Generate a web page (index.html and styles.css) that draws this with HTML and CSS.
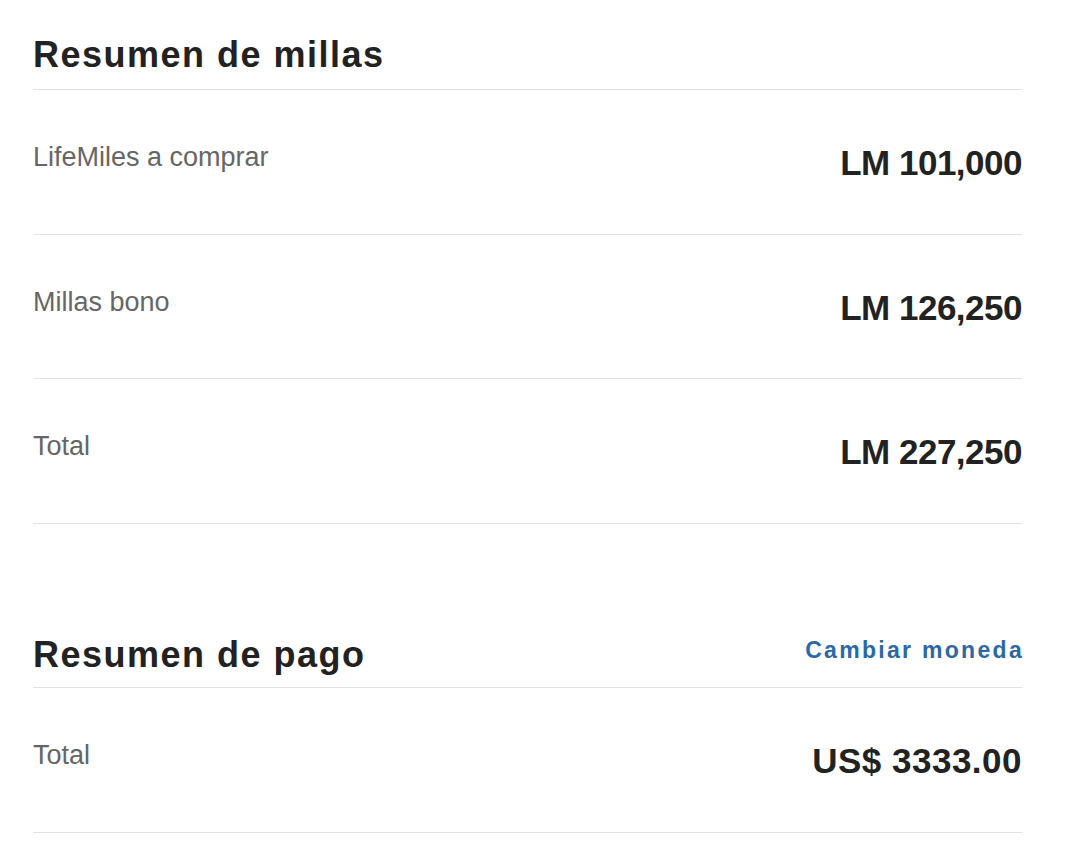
FILE: index.html
```html
<!DOCTYPE html>
<html lang="es">
<head>
<meta charset="utf-8">
<title>Resumen</title>
<link rel="stylesheet" href="styles.css">
</head>
<body>
<main class="page">
  <section class="summary">
    <div class="summary-head">
      <h2 class="summary-title">Resumen de millas</h2>
    </div>
    <div class="row">
      <span class="row-label">LifeMiles a comprar</span>
      <span class="row-value">LM 101,000</span>
    </div>
    <div class="row">
      <span class="row-label">Millas bono</span>
      <span class="row-value">LM 126,250</span>
    </div>
    <div class="row">
      <span class="row-label">Total</span>
      <span class="row-value">LM 227,250</span>
    </div>
  </section>
  <section class="summary summary-pay">
    <div class="summary-head">
      <h2 class="summary-title">Resumen de pago</h2>
      <a class="summary-link" href="#">Cambiar moneda</a>
    </div>
    <div class="row">
      <span class="row-label">Total</span>
      <span class="row-value">US$ 3333.00</span>
    </div>
  </section>
</main>
</body>
</html>
```

FILE: styles.css
```css
html, body {
  margin: 0;
  padding: 0;
  background: #ffffff;
}

body {
  font-family: "Liberation Sans", Arial, sans-serif;
  color: #222222;
}

.page {
  width: 989px;
  padding-left: 33px;
  padding-top: 35px;
}

.summary-head {
  display: flex;
  justify-content: space-between;
  align-items: flex-start;
  border-bottom: 1px solid #e2e2e2;
  padding-bottom: 14px;
}

.summary-title {
  margin: 0;
  font-size: 36px;
  line-height: 40px;
  font-weight: 700;
  letter-spacing: 1.5px;
  color: #222222;
}

.summary-pay {
  margin-top: 111px;
}

.summary-pay .summary-head {
  padding-bottom: 12px;
}

.summary-link {
  margin-top: 2px;
  font-size: 23px;
  line-height: 26px;
  font-weight: 700;
  letter-spacing: 2.3px;
  margin-right: -2px;
  color: #2b69a6;
  text-decoration: none;
}

.row {
  display: flex;
  justify-content: space-between;
  align-items: flex-start;
  height: 144px;
  box-sizing: border-box;
  padding-top: 51px;
  border-bottom: 1px solid #e2e2e2;
}

.summary-head + .row,
.row:last-child {
  height: 145px;
}

.row-label {
  font-size: 27px;
  line-height: 32px;
  color: #666666;
}

.row-value {
  margin-top: 2px;
  font-size: 35px;
  line-height: 40px;
  font-weight: 700;
  letter-spacing: -0.5px;
  color: #222222;
}

.summary-pay .row-value {
  letter-spacing: 0.5px;
}
```
